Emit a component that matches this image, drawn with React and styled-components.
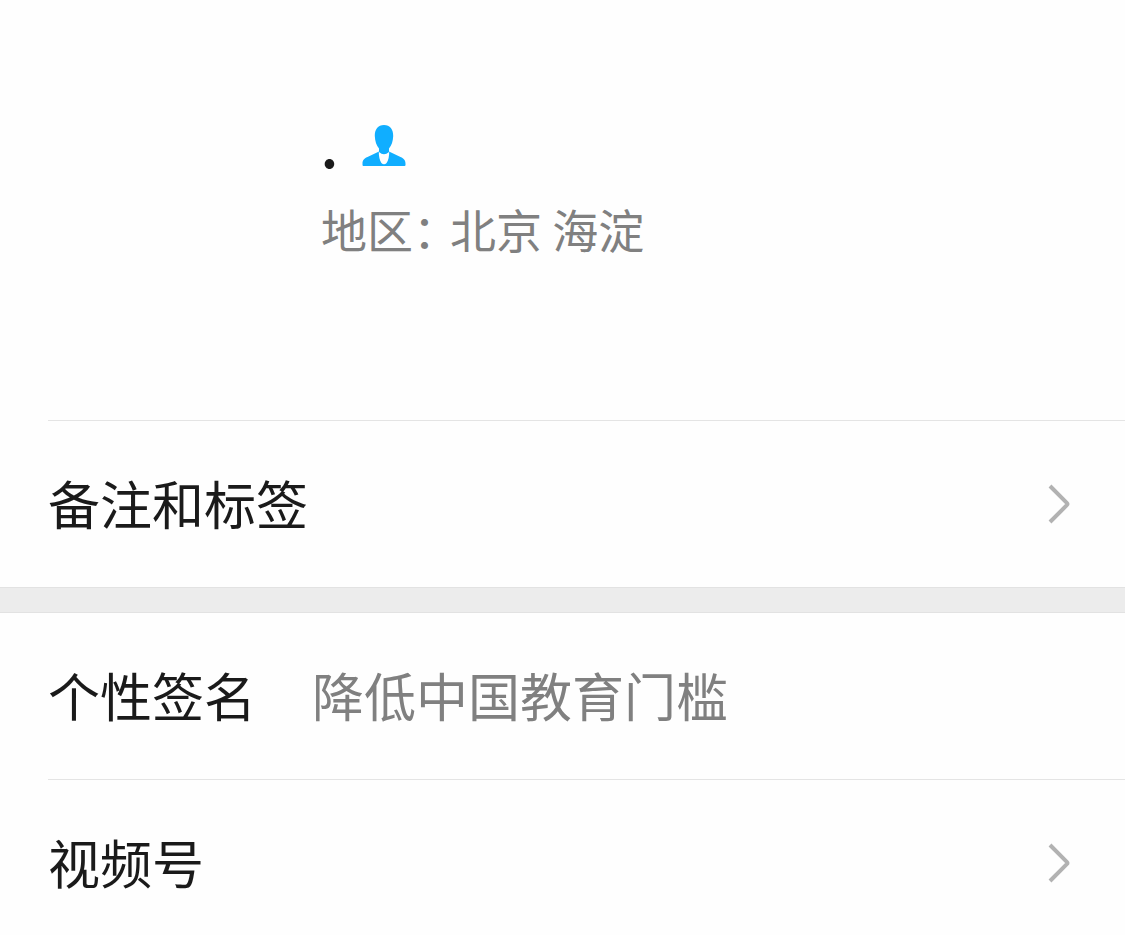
import React from "react";
import styled, { createGlobalStyle } from "styled-components";

const GlobalStyle = createGlobalStyle`
  body {
    margin: 0;
    background-color: #fefefe;
    font-family: "Noto Sans CJK SC", sans-serif;
  }
`;

const PersonIcon = () => (
  <svg width="44" height="42" viewBox="0 0 44 42" fill="#10aeff" aria-hidden="true">
    <path d="M17 26.500L5.500 32C1.800 33.700 0.500 35 0.500 39V40Q0.500 41 1.500 41H42.500Q43.500 41 43.500 40V39C43.500 35 42 33.700 38.500 32L27 26.500Z" />
    <path d="M16.800 26H27.200C27.300 31 26.400 35.500 24.600 38Q22 40.500 19.400 38C17.600 35.500 16.700 31 16.800 26Z" fill="#fefefe" />
    <path d="M22 0C28 0 31.400 4.500 31.200 11C31 16.500 29.500 20.500 27 23.500V27Q22 31.500 17 27V23.500C14.500 20.500 13 16.500 12.800 11C12.600 4.500 16 0 22 0Z" />
  </svg>
);

const ChevronIcon = () => (
  <svg width="24" height="40" viewBox="0 0 24 40" fill="none" stroke="#b2b2b2" strokeWidth="4" aria-hidden="true">
    <path d="M2 2L18.800 18.800Q20 20 18.800 21.200L2 38" />
  </svg>
);

const App = () => {
  return (
    <>
      <GlobalStyle />
      <Page>
        <Profile>
          <NameRow>
            <Name>.</Name>
            <PersonIcon />
          </NameRow>
          <Region>
            <RegionLabel>地区：</RegionLabel>
            <span>北京 海淀</span>
          </Region>
        </Profile>
        <section>
          <Divider />
          <RowButton type="button">
            <Label>备注和标签</Label>
            <ChevronIcon />
          </RowButton>
        </section>
        <Gap />
        <section>
          <Row>
            <Label>个性签名</Label>
            <Value>降低中国教育门槛</Value>
          </Row>
          <Divider />
          <RowButton type="button">
            <Label>视频号</Label>
            <ChevronIcon />
          </RowButton>
        </section>
      </Page>
    </>
  );
};

export default App;

const Page = styled.main`
  color: #1a1a1a;
`;

const Profile = styled.header`
  padding: 112px 48px 158px 321px;
`;

const NameRow = styled.div`
  display: flex;
  align-items: center;
  gap: 24px;
  height: 68px;
`;

const Name = styled.h1`
  margin: 0;
  font-size: 52px;
  line-height: 68px;
  font-weight: 700;
`;

const Region = styled.p`
  display: flex;
  margin: 14px 0 0;
  color: #808080;
  font-size: 46px;
  line-height: 68px;
`;

/* the full-width colon leaves a wide blank, so the value starts inside it */
const RegionLabel = styled.span`
  width: 129px;
  white-space: nowrap;
`;

const Divider = styled.hr`
  height: 1px;
  margin: 0 0 0 48px;
  border: 0;
  background-color: #e4e4e4;
`;

const Row = styled.div`
  display: flex;
  align-items: center;
  box-sizing: border-box;
  width: 100%;
  min-height: 166px;
  padding: 0 53px 0 48px;
  font-size: 52px;
  line-height: 76px;
`;

const RowButton = styled(Row).attrs({ as: "button" })`
  justify-content: space-between;
  border: 0;
  background: none;
  color: inherit;
  font-family: inherit;
  text-align: left;
  cursor: pointer;
`;

const Label = styled.span`
  flex: none;
  padding-bottom: 2px;
`;

const Value = styled.span`
  margin-left: 56px;
  padding-bottom: 2px;
  color: #808080;
`;

const Gap = styled.div`
  box-sizing: border-box;
  height: 26px;
  border: solid #e2e2e2;
  border-width: 1px 0;
  background-color: #ececec;
`;
